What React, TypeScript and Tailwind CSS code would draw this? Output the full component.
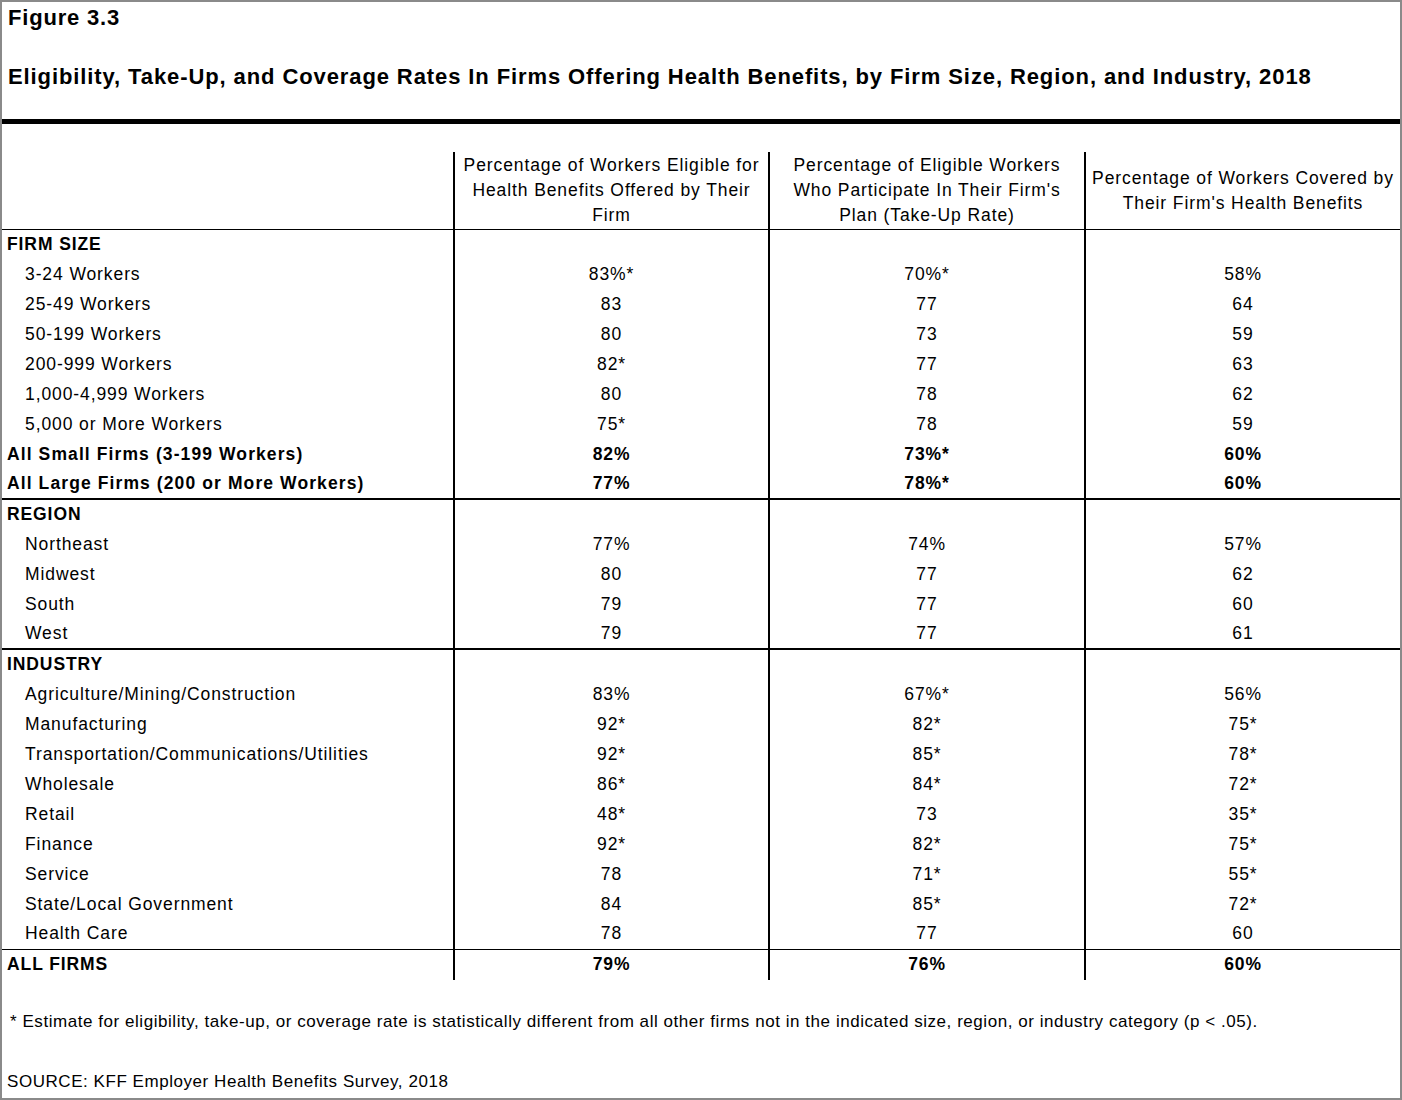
// Figure 3.3 — eligibility, take-up and coverage rates table (KFF EHBS 2018).
// Plain table layout: a 4-column grid per row, section rules drawn as row borders.

type Row = {
	label: string;
	values: [string, string, string];
	bold?: boolean;
	heading?: boolean;
};

type Section = { title: string; rows: Row[]; rule: 'thick' | 'thin' };

const sections: Section[] = [
	{
		title: 'FIRM SIZE',
		rule: 'thick',
		rows: [
			{ label: '3-24 Workers', values: ['83%*', '70%*', '58%'] },
			{ label: '25-49 Workers', values: ['83', '77', '64'] },
			{ label: '50-199 Workers', values: ['80', '73', '59'] },
			{ label: '200-999 Workers', values: ['82*', '77', '63'] },
			{ label: '1,000-4,999 Workers', values: ['80', '78', '62'] },
			{ label: '5,000 or More Workers', values: ['75*', '78', '59'] },
			{ label: 'All Small Firms (3-199 Workers)', values: ['82%', '73%*', '60%'], bold: true },
			{ label: 'All Large Firms (200 or More Workers)', values: ['77%', '78%*', '60%'], bold: true },
		],
	},
	{
		title: 'REGION',
		rule: 'thick',
		rows: [
			{ label: 'Northeast', values: ['77%', '74%', '57%'] },
			{ label: 'Midwest', values: ['80', '77', '62'] },
			{ label: 'South', values: ['79', '77', '60'] },
			{ label: 'West', values: ['79', '77', '61'] },
		],
	},
	{
		title: 'INDUSTRY',
		rule: 'thin',
		rows: [
			{ label: 'Agriculture/Mining/Construction', values: ['83%', '67%*', '56%'] },
			{ label: 'Manufacturing', values: ['92*', '82*', '75*'] },
			{ label: 'Transportation/Communications/Utilities', values: ['92*', '85*', '78*'] },
			{ label: 'Wholesale', values: ['86*', '84*', '72*'] },
			{ label: 'Retail', values: ['48*', '73', '35*'] },
			{ label: 'Finance', values: ['92*', '82*', '75*'] },
			{ label: 'Service', values: ['78', '71*', '55*'] },
			{ label: 'State/Local Government', values: ['84', '85*', '72*'] },
			{ label: 'Health Care', values: ['78', '77', '60'] },
		],
	},
];

const headers = [
	['Percentage of Workers Eligible for', 'Health Benefits Offered by Their', 'Firm'],
	["Percentage of Eligible Workers", "Who Participate In Their Firm's", 'Plan (Take-Up Rate)'],
	['Percentage of Workers Covered by', "Their Firm's Health Benefits"],
];

function TableRow({ row, last }: { row: Row; last?: 'thick' | 'thin' }) {
	const rule = last === 'thick' ? 'border-b-2 border-black' : last === 'thin' ? 'border-b border-black' : '';
	const strong = row.bold || row.heading;
	return (
		<div className={`grid h-[30px] grid-cols-[451px_315px_316px_316px] ${rule}`}>
			<div
				className={`flex items-center pb-[2px] whitespace-nowrap ${strong ? 'pl-[5px] font-bold' : 'pl-[23px]'} ${row.bold ? 'tracking-[1.1px]' : ''}`}
			>
				{row.label}
			</div>
			{row.values.map((v, i) => (
				<div
					key={i}
					className={`flex items-center justify-center border-l-2 border-black pb-[2px] ${strong ? 'font-bold' : ''}`}
				>
					{v}
				</div>
			))}
		</div>
	);
}

function EmptyRow({ label }: { label: string }) {
	return (
		<div className="grid h-[30px] grid-cols-[451px_315px_316px_316px]">
			<div className="flex items-center pb-[2px] pl-[5px] font-bold">{label}</div>
			<div className="border-l-2 border-black" />
			<div className="border-l-2 border-black" />
			<div className="border-l-2 border-black" />
		</div>
	);
}

export default function App() {
	return (
		<div
			className="h-[1100px] w-[1402px] border-2 border-[#8a8a8a] bg-white text-black"
			style={{ fontFamily: '"Liberation Sans", Arial, sans-serif' }}
		>
			<div className="pl-[6px] pt-[2px] text-[22px] font-bold leading-[28px] tracking-[0.8px]">Figure 3.3</div>
			<div className="mt-[31px] pl-[6px] text-[22px] font-bold leading-[28px] tracking-[0.9px] whitespace-nowrap">
				Eligibility, Take-Up, and Coverage Rates In Firms Offering Health Benefits, by Firm Size, Region, and
				Industry, 2018
			</div>
			<div className="mt-[28px] h-[5px] bg-black" />

			<div className="mt-[28px] text-[17.5px] tracking-[0.9px]">
				<div className="grid h-[78px] grid-cols-[451px_315px_316px_316px] border-b border-black">
					<div />
					{headers.map((lines, i) => (
						<div
							key={i}
							className="flex flex-col items-center justify-center border-l-2 border-black text-center leading-[25px]"
						>
							{lines.map((l) => (
								<span key={l} className="whitespace-nowrap">
									{l}
								</span>
							))}
						</div>
					))}
				</div>

				{sections.map((s) => (
					<div key={s.title}>
						<EmptyRow label={s.title} />
						{s.rows.map((r, i) => (
							<TableRow key={r.label} row={r} last={i === s.rows.length - 1 ? s.rule : undefined} />
						))}
					</div>
				))}

				<TableRow row={{ label: 'ALL FIRMS', values: ['79%', '76%', '60%'], heading: true }} />
			</div>

			<div className="mt-[30px] pl-[8px] text-[17px] leading-[24px] tracking-[0.55px] whitespace-nowrap">
				* Estimate for eligibility, take-up, or coverage rate is statistically different from all other firms not
				in the indicated size, region, or industry category (p &lt; .05).
			</div>
			<div className="mt-[36px] pl-[5px] text-[17px] leading-[24px] tracking-[0.55px]">
				SOURCE: KFF Employer Health Benefits Survey, 2018
			</div>
		</div>
	);
}
